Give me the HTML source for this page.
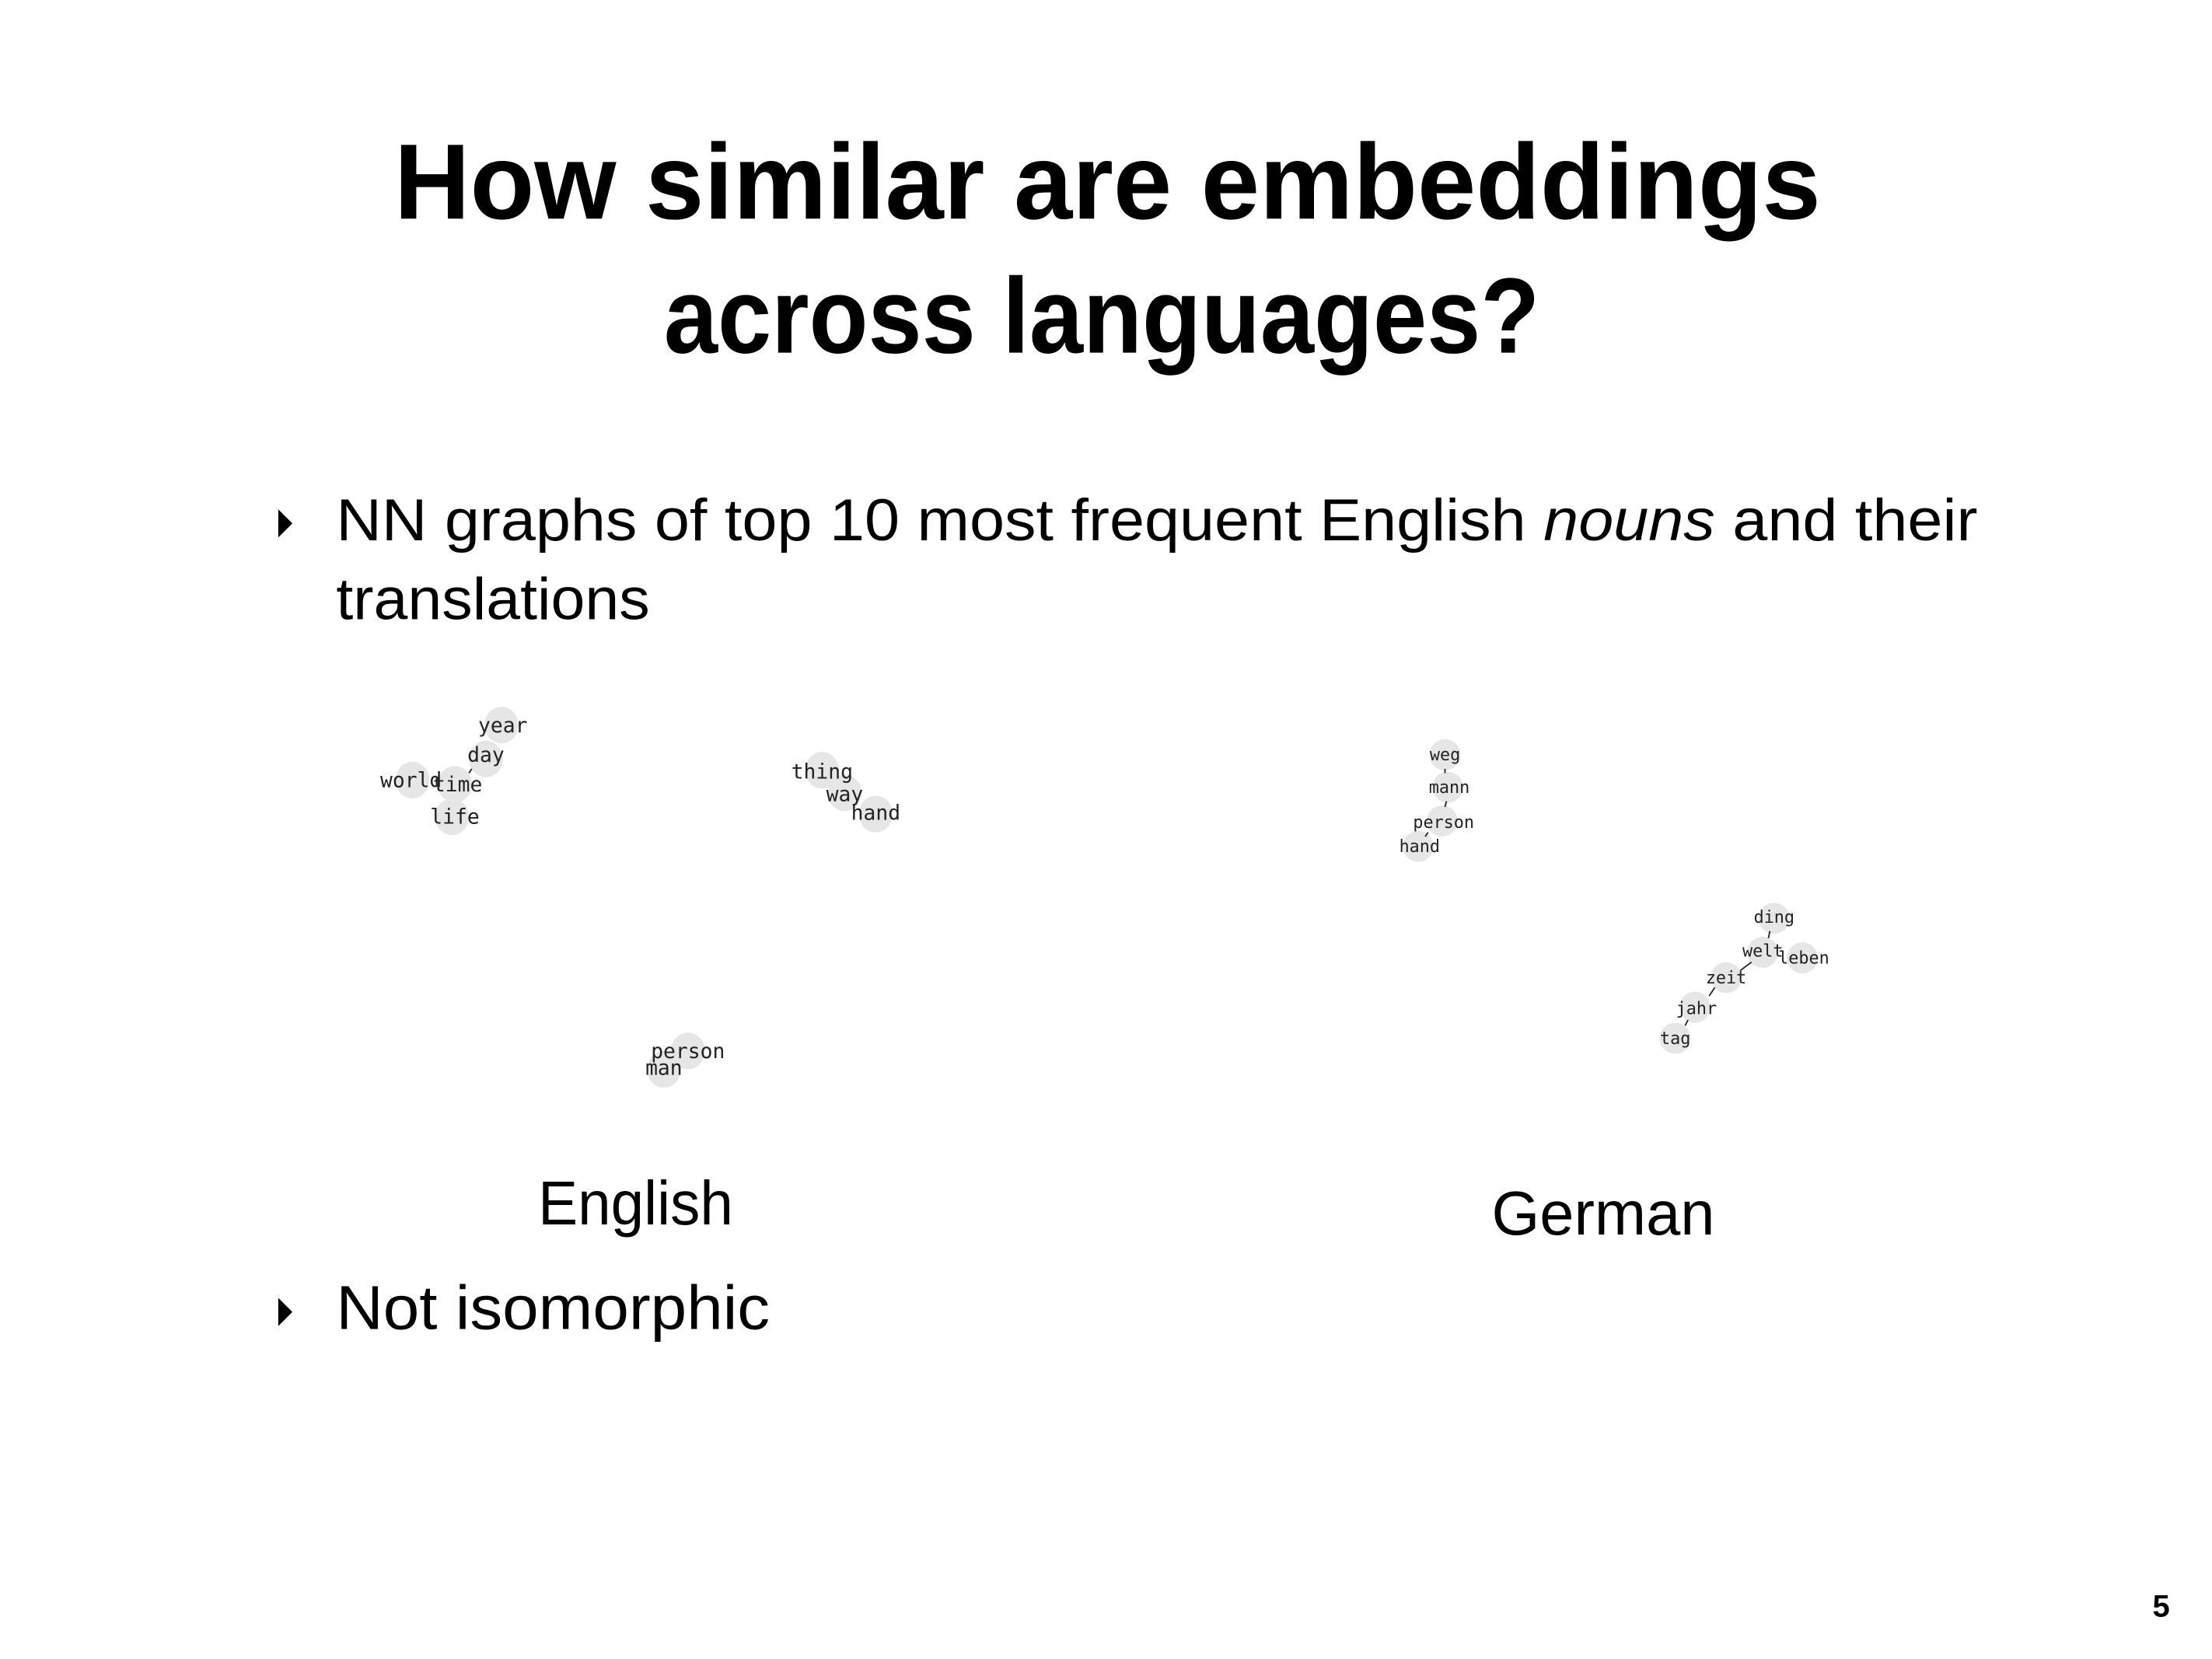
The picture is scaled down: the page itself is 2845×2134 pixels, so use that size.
<!DOCTYPE html>
<html><head><meta charset="utf-8"><style>html,body{margin:0;padding:0;background:#fff;overflow:hidden}svg{display:block}</style></head><body>
<svg width="2845" height="2134" viewBox="0 0 1566 1176" preserveAspectRatio="none" xmlns="http://www.w3.org/2000/svg">
<rect width="1566" height="1176" fill="#fff"/>
<g font-family="Liberation Sans, sans-serif" fill="#000">
<text x="784" y="155" font-size="76" font-weight="bold" text-anchor="middle" textLength="1010" lengthAdjust="spacingAndGlyphs">How similar are embeddings</text>
<text x="780" y="250" font-size="76" font-weight="bold" text-anchor="middle" textLength="620" lengthAdjust="spacingAndGlyphs">across languages?</text>
<polygon points="197,361 197,381 207,371" fill="#000"/>
<text x="238" y="383" font-size="42" textLength="1162" lengthAdjust="spacingAndGlyphs">NN graphs of top 10 most frequent English <tspan font-style="italic">nouns</tspan> and their</text>
<text x="238" y="439" font-size="42" textLength="222" lengthAdjust="spacingAndGlyphs">translations</text>
<text x="381" y="868" font-size="44" textLength="138" lengthAdjust="spacingAndGlyphs">English</text>
<text x="1056" y="875" font-size="44" textLength="158" lengthAdjust="spacingAndGlyphs">German</text>
<polygon points="197,920 197,940 207,930" fill="#000"/>
<text x="238" y="942" font-size="44" textLength="307" lengthAdjust="spacingAndGlyphs">Not isomorphic</text>
<text x="1530" y="1146" font-size="22" font-weight="bold" text-anchor="middle">5</text>
</g>
<g fill="#e6e6e6">
<ellipse cx="355" cy="514" rx="12" ry="13"/><ellipse cx="344" cy="538" rx="12" ry="13"/>
<ellipse cx="292" cy="553" rx="12" ry="13"/><ellipse cx="322" cy="556" rx="12" ry="13"/>
<ellipse cx="320" cy="579" rx="12" ry="13"/><ellipse cx="582" cy="546" rx="12" ry="13"/>
<ellipse cx="598" cy="562" rx="12" ry="13"/><ellipse cx="620" cy="577" rx="12" ry="13"/>
<ellipse cx="487" cy="745" rx="12" ry="13"/><ellipse cx="470" cy="758" rx="12" ry="13"/>
<ellipse cx="1023" cy="535" rx="11" ry="11"/><ellipse cx="1025" cy="558" rx="11" ry="11"/>
<ellipse cx="1021" cy="582" rx="11" ry="11"/><ellipse cx="1004" cy="600" rx="11" ry="11"/>
<ellipse cx="1256" cy="651" rx="11" ry="11"/><ellipse cx="1248" cy="675" rx="11" ry="11"/>
<ellipse cx="1276" cy="679" rx="11" ry="11"/><ellipse cx="1222" cy="693" rx="11" ry="11"/>
<ellipse cx="1200" cy="714" rx="11" ry="11"/><ellipse cx="1186" cy="736" rx="11" ry="11"/>
</g>
<g stroke="#222" stroke-width="1">
<line x1="334" y1="545" x2="332" y2="548"/><line x1="309" y1="551" x2="309" y2="557"/>
<line x1="1023" y1="545" x2="1023" y2="548"/><line x1="1024" y1="568" x2="1023" y2="572"/>
<line x1="1011" y1="590" x2="1009" y2="593"/><line x1="1253" y1="660" x2="1252" y2="665"/>
<line x1="1240" y1="682" x2="1232" y2="688"/><line x1="1214" y1="700" x2="1210" y2="706"/>
<line x1="1195" y1="723" x2="1193" y2="727"/>
</g>
<g font-family="DejaVu Sans Mono, monospace" fill="#222" text-anchor="middle">
<g font-size="14.5">
<text x="356" y="519">year</text><text x="344" y="540">day</text>
<text x="291" y="558">world</text><text x="324" y="561">time</text>
<text x="322" y="584">life</text><text x="582" y="552">thing</text>
<text x="598" y="568">way</text><text x="620" y="581">hand</text>
<text x="487" y="750">person</text><text x="470" y="762">man</text>
</g>
<g font-size="12">
<text x="1023" y="539">weg</text><text x="1026" y="562">mann</text>
<text x="1022" y="587">person</text><text x="1005" y="604">hand</text>
<text x="1256" y="654">ding</text><text x="1248" y="678">welt</text>
<text x="1277" y="683">leben</text><text x="1222" y="697">zeit</text>
<text x="1201" y="719">jahr</text><text x="1186" y="740">tag</text>
</g>
</g>
</svg>
</body></html>
